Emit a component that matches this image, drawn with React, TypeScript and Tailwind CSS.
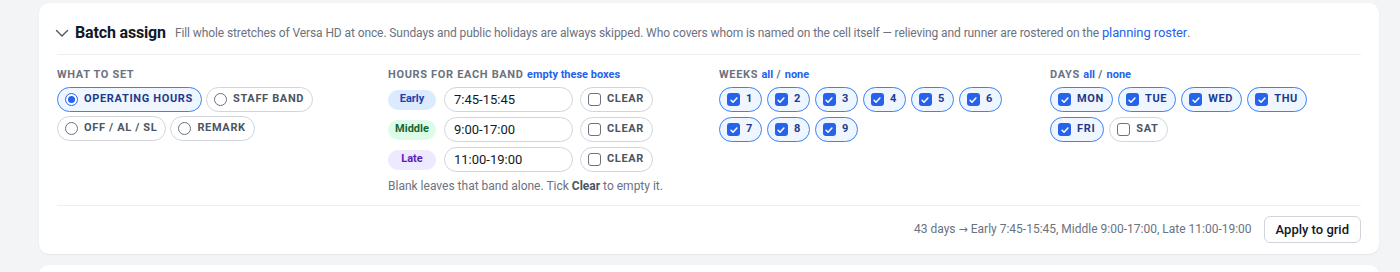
import React, { useState } from "react";

const FONT = { fontFamily: "Roboto, 'Noto Sans', sans-serif" };

const Check = ({ on }: { on: boolean }) =>
  on ? (
    <span className="flex h-[13px] w-[13px] items-center justify-center rounded-[3px] bg-[#2563eb]">
      <svg viewBox="0 0 12 12" className="h-[10px] w-[10px]" fill="none">
        <path d="M2.5 6.3l2.3 2.3 4.7-5" stroke="white" strokeWidth={1.8} strokeLinecap="round" strokeLinejoin="round" />
      </svg>
    </span>
  ) : (
    <span className="h-[13px] w-[13px] rounded-[3px] border border-[#6b7280] bg-white" />
  );

const Radio = ({ on }: { on: boolean }) =>
  on ? (
    <span className="flex h-[13px] w-[13px] items-center justify-center rounded-full border border-[#2563eb] bg-white">
      <span className="h-[7px] w-[7px] rounded-full bg-[#2563eb]" />
    </span>
  ) : (
    <span className="h-[13px] w-[13px] rounded-full border border-[#6b7280] bg-white" />
  );

const Pill = ({ on, children, radio }: { on: boolean; children: React.ReactNode; radio?: boolean }) => (
  <label
    className={
      on
        ? "flex h-[25px] items-center gap-[6px] rounded-full border border-[#3b82f6] bg-[#eff6ff] pl-[7px] pr-[8px] text-[11px] font-bold tracking-[0.06em] text-[#1e3a8a]"
        : "flex h-[25px] items-center gap-[6px] rounded-full border border-[#d1d5db] bg-white pl-[7px] pr-[8px] text-[11px] font-bold tracking-[0.06em] text-[#4b5563]"
    }
  >
    {radio ? <Radio on={on} /> : <Check on={on} />}
    {children}
  </label>
);

const SectionLabel = ({ children }: { children: React.ReactNode }) => (
  <div className="mb-[4px] text-[11px] font-bold uppercase leading-[16px] tracking-[0.06em] text-[#6b7280]">{children}</div>
);

const bands = [
  { name: "Early", val: "7:45-15:45", cls: "bg-[#dbeafe] text-[#1e40af]" },
  { name: "Middle", val: "9:00-17:00", cls: "bg-[#dcfce7] text-[#166534]" },
  { name: "Late", val: "11:00-19:00", cls: "bg-[#ede9fe] text-[#5b21b6]" },
];

export default function App() {
  const [mode, setMode] = useState("OPERATING HOURS");
  const weeks = [1, 2, 3, 4, 5, 6, 7, 8, 9];
  const days = [
    { d: "MON", on: true },
    { d: "TUE", on: true },
    { d: "WED", on: true },
    { d: "THU", on: true },
    { d: "FRI", on: true },
    { d: "SAT", on: false },
  ];

  return (
    <div className="h-[272px] overflow-hidden bg-[#f3f4f6] pt-[3px]" style={FONT}>
      <div className="ml-[39px] w-[1340px] rounded-[10px] bg-white px-[18px] shadow-[0_1px_2px_rgba(0,0,0,0.06)]">
        <div className="flex h-[52px] items-center border-b border-[#eef0f3] pt-[8px]">
          <svg viewBox="0 0 14 14" className="ml-[-2px] mr-[6px] h-[14px] w-[14px] text-[#4b5563]" fill="none">
            <path d="M1.5 4.5l5.5 5.5 5.5-5.5" stroke="currentColor" strokeWidth={1.4} strokeLinecap="round" strokeLinejoin="round" />
          </svg>
          <h2 className="mr-[9px] text-[16px] font-bold tracking-[-0.01em] text-[#111827]">Batch assign</h2>
          <p className="text-[12px] tracking-[-0.008em] text-[#6b7280]">
            Fill whole stretches of Versa HD at once. Sundays and public holidays are always skipped. Who covers whom is named on the cell itself — relieving and runner are rostered on the{" "}
            <a className="text-[13px] text-[#2563eb]">planning roster</a>.
          </p>
        </div>

        <div className="grid grid-cols-4 gap-5 border-b border-[#eef0f3] pb-[11px] pt-[12px]">
          <div>
            <SectionLabel>What to set</SectionLabel>
            <div className="flex flex-wrap gap-[4px]">
              {["OPERATING HOURS", "STAFF BAND", "OFF / AL / SL", "REMARK"].map((m) => (
                <div key={m} onClick={() => setMode(m)}>
                  <Pill on={mode === m} radio>
                    {m}
                  </Pill>
                </div>
              ))}
            </div>
          </div>

          <div>
            <SectionLabel>
              Hours for each band <span className="normal-case tracking-normal text-[#2563eb]">empty these boxes</span>
            </SectionLabel>
            <div className="flex flex-col gap-[5px]">
              {bands.map((b) => (
                <div key={b.name} className="flex items-center">
                  <span className={"flex h-[20px] w-[48px] items-center justify-center rounded-full text-[11px] font-bold " + b.cls}>{b.name}</span>
                  <input
                    defaultValue={b.val}
                    className="ml-[8px] h-[25px] w-[129px] rounded-full border border-[#d1d5db] px-[9px] text-[13px] text-[#111827] outline-none"
                  />
                  <div className="ml-[7px]">
                    <Pill on={false}>CLEAR</Pill>
                  </div>
                </div>
              ))}
            </div>
            <p className="mt-[6px] text-[12px] leading-[16px] text-[#6b7280]">
              Blank leaves that band alone. Tick <b className="font-bold text-[#4b5563]">Clear</b> to empty it.
            </p>
          </div>

          <div>
            <SectionLabel>
              Weeks <span className="normal-case tracking-normal text-[#2563eb]">all</span> /{" "}
              <span className="normal-case tracking-normal text-[#2563eb]">none</span>
            </SectionLabel>
            <div className="flex flex-wrap gap-[5px]">
              {weeks.map((w) => (
                <Pill key={w} on>
                  {w}
                </Pill>
              ))}
            </div>
          </div>

          <div>
            <SectionLabel>
              Days <span className="normal-case tracking-normal text-[#2563eb]">all</span> /{" "}
              <span className="normal-case tracking-normal text-[#2563eb]">none</span>
            </SectionLabel>
            <div className="flex flex-wrap gap-[5px]">
              {days.map((d) => (
                <Pill key={d.d} on={d.on}>
                  {d.d}
                </Pill>
              ))}
            </div>
          </div>
        </div>

        <div className="flex items-center justify-end gap-[12px] pb-[11px] pt-[10px]">
          <span className="text-[12px] text-[#6b7280]">
            43 days <span style={{ fontFamily: "'DejaVu Sans', sans-serif" }} className="text-[11px]">→</span> Early 7:45-15:45, Middle 9:00-17:00, Late 11:00-19:00
          </span>
          <button className="h-[27px] rounded-[6px] border border-[#d1d5db] bg-white px-[11px] text-[13px] font-medium text-[#111827]">
            Apply to grid
          </button>
        </div>
      </div>
      <div className="ml-[39px] mt-[11px] h-[40px] w-[1340px] rounded-[10px] bg-white" />
    </div>
  );
}
